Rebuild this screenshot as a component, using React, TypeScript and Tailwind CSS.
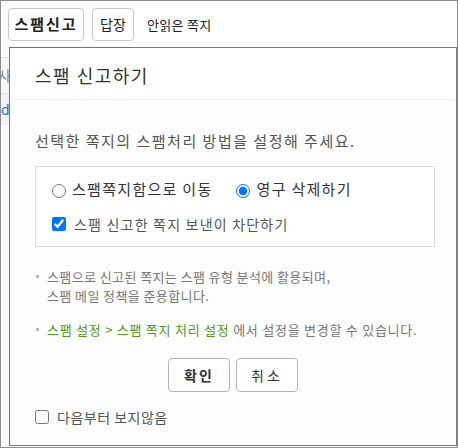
import React from "react";

const font = { fontFamily: '"Noto Sans CJK KR", "Noto Sans", sans-serif' };

export default function App() {
  return (
    <div
      className="relative w-[458px] h-[448px] overflow-hidden bg-white border border-[#8c8c8c]"
      style={font}
    >
      {/* toolbar */}
      <div className="flex items-center h-[46px] pl-[7px] pt-[1px]">
        <div className="h-[33px] w-[76px] flex items-center justify-center border border-[#c8c8c8] rounded-[4px] text-[15px] font-bold text-[#222] tracking-[2px]">
          스팸신고
        </div>
        <div className="ml-[8px] h-[33px] w-[42px] flex items-center justify-center border border-[#c8c8c8] rounded-[4px] text-[14px] text-[#222]">
          답장
        </div>
        <div className="ml-[13px] text-[13px] tracking-[0.3px] text-[#222]">안읽은 쪽지</div>
      </div>
      {/* background list (mostly hidden) */}
      <div className="mt-[10px] h-[36px] border-t border-[#dcdcdc] bg-[#f8f8f8] flex items-center text-[14px] text-[#888] -ml-[3px]">
        사
      </div>
      <div className="h-[32px] bg-[#eef3fa] border-t border-[#e4e4e4] flex items-center text-[14px] text-[#2f6db8]">
        d
      </div>

      {/* dialog */}
      <div className="absolute left-[8px] top-[46px] w-[448px] h-[399px] bg-white border border-[#777] flex flex-col">
        <div className="h-[52px] mx-[2px] border-b border-[#eeeeee] pl-[23px] pt-[15px]">
          <div className="text-[18px] leading-[24px] tracking-[1.5px] text-[#333]">스팸 신고하기</div>
        </div>
        <div className="flex flex-col pl-[25px] pr-[21px] bg-[#fdfdfd] flex-1">
          <div className="pt-[31px] text-[15px] leading-[20px] tracking-[1.5px] text-[#555]">
            선택한 쪽지의 스팸처리 방법을 설정해 주세요.
          </div>
          <div className="mt-[15px] h-[81px] border border-[#dddddd] bg-white pl-[16px] pt-[12px]">
            <div className="flex items-center h-[20px] text-[15px] tracking-[1.3px] text-[#333]">
              <label className="flex items-center">
                <input type="radio" name="r" className="w-[14px] h-[14px] mt-[4px]" />
                <span className="ml-[6px]">스팸쪽지함으로 이동</span>
              </label>
              <label className="flex items-center ml-[23px]">
                <input type="radio" name="r" defaultChecked className="w-[14px] h-[14px] mt-[4px]" />
                <span className="ml-[7px]">영구 삭제하기</span>
              </label>
            </div>
            <div className="flex items-center h-[20px] mt-[15px] text-[14px] tracking-[1.2px] text-[#555]">
              <input type="checkbox" defaultChecked className="w-[14px] h-[14px]" />
              <span className="ml-[8px]">스팸 신고한 쪽지 보낸이 차단하기</span>
            </div>
          </div>
          <div className="mt-[20px] flex text-[13px] leading-[19px] tracking-[0.4px] text-[#777]">
            <span className="w-[3px] h-[3px] bg-[#bbbbbb] mt-[8px] ml-[1px] shrink-0" />
            <span className="ml-[8px]">
              스팸으로 신고된 쪽지는 스팸 유형 분석에 활용되며,
              <br />
              스팸 메일 정책을 준용합니다.
            </span>
          </div>
          <div className="mt-[15px] flex text-[13px] leading-[19px] tracking-[0.75px] text-[#777]">
            <span className="w-[3px] h-[3px] bg-[#bbbbbb] mt-[8px] ml-[1px] shrink-0" />
            <span className="ml-[8px] whitespace-nowrap">
              <span className="text-[#4f9a21]">스팸 설정 &gt; 스팸 쪽지 처리 설정</span> 에서 설정을 변경할 수 있습니다.
            </span>
          </div>
          <div className="mt-[19px] flex justify-center gap-[6px] pr-[4px]">
            <div className="w-[62px] h-[34px] flex items-center justify-center border border-[#b4b4b4] rounded-[4px] bg-white text-[14px] font-bold text-[#333] tracking-[2px]">
              확인
            </div>
            <div className="w-[62px] h-[34px] flex items-center justify-center border border-[#b4b4b4] rounded-[4px] bg-white text-[14px] text-[#333] tracking-[3px]">
              취소
            </div>
          </div>
          <div className="mt-[15px] flex items-center h-[20px] text-[14px] tracking-[0.5px] text-[#555]">
            <input type="checkbox" className="w-[14px] h-[14px]" />
            <span className="ml-[8px]">다음부터 보지않음</span>
          </div>
        </div>
      </div>
    </div>
  );
}
